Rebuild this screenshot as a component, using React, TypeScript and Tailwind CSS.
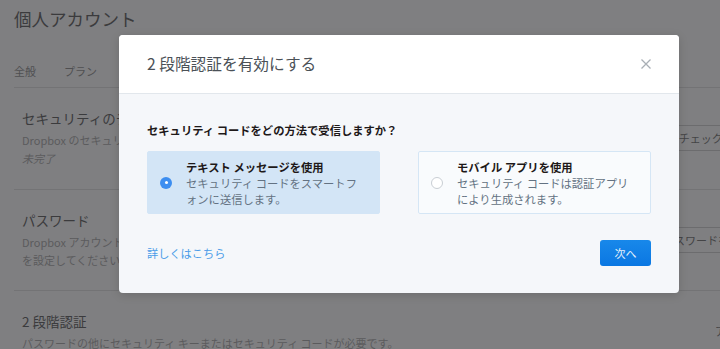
import React from "react";

function Section({
  title,
  lines,
  italicLast,
  action,
  pb,
}: {
  title: string;
  lines: string[];
  italicLast?: boolean;
  action: React.ReactNode;
  pb: string;
}) {
  return (
    <div className={`flex items-center border-b border-[#737375] pl-2 pt-5 ${pb}`}>
      <div className="w-[560px] shrink-0">
        <div className="text-[13.5px] leading-5 text-[#3b3b3d]">{title}</div>
        <div className="mt-[3px] text-[11px] leading-[18px] text-[#5b5b5d]">
          {lines.map((l, i) => (
            <div key={i} className={italicLast && i === lines.length - 1 ? "italic" : ""}>
              {l}
            </div>
          ))}
        </div>
      </div>
      {action}
    </div>
  );
}

function Radio({ checked }: { checked: boolean }) {
  return checked ? (
    <span className="flex size-3 shrink-0 items-center justify-center rounded-full bg-[#3d8ef0]">
      <span className="size-[3px] rounded-full bg-white" />
    </span>
  ) : (
    <span className="size-3 shrink-0 rounded-full border border-[#c9ced4] bg-white" />
  );
}

function Option({
  checked,
  title,
  desc,
}: {
  checked: boolean;
  title: string;
  desc: [string, string];
}) {
  return (
    <div
      className={`flex h-[63px] items-center rounded-[2px] border pl-3 pr-[19px] ${
        checked ? "border-[#d3e5f6] bg-[#d3e5f6]" : "border-[#d5e6f5] bg-[#f9fbfd]"
      }`}
    >
      <Radio checked={checked} />
      <div className="ml-[14px] text-[11.3px] leading-4">
        <div className="font-bold text-[#1e1919]">{title}</div>
        <div className="text-[#637282]">
          {desc[0]}
          <br />
          {desc[1]}
        </div>
      </div>
    </div>
  );
}

export default function App() {
  return (
    <div className="relative h-[349px] w-[720px] overflow-hidden bg-[#7f7f81] font-['Noto_Sans_CJK_JP',sans-serif]">
      {/* page behind the dialog */}
      <div className="ml-[14px] w-[800px]">
        <div className="pt-[7px] text-[17.5px] leading-6 text-[#3b3b3d]">個人アカウント</div>
        <div className="mt-8 flex gap-[28px] border-b border-[#737375] pb-[8px] text-[11px] leading-4 text-[#4f4f51]">
          <span>全般</span>
          <span>プラン</span>
          <span>セキュリティ</span>
        </div>
        <Section
          title="セキュリティのチェック"
          lines={["Dropbox のセキュリティ チェックを実行してください。", "未完了"]}
          italicLast
          pb="pb-[22px]"
          action={
            <span className="ml-[16px] whitespace-nowrap rounded-[3px] border border-[#6c6c6e] px-3 text-[11px] leading-6 text-[#444446]">
              セキュリティ チェックを開始
            </span>
          }
        />
        <Section
          title="パスワード"
          lines={["Dropbox アカウントに強力なパスワード", "を設定してください。"]}
          pb="pb-[21px]"
          action={
            <span className="ml-[68px] whitespace-nowrap rounded-[3px] border border-[#6c6c6e] px-3 text-[11px] leading-6 text-[#444446]">
              パスワードを変更
            </span>
          }
        />
        <Section
          title="2 段階認証"
          lines={["パスワードの他にセキュリティ キーまたはセキュリティ コードが必要です。"]}
          pb="pb-5"
          action={
            <span className="ml-[133px] whitespace-nowrap text-[11px] text-[#444446]">アクティブ</span>
          }
        />
      </div>

      {/* dialog */}
      <div className="absolute left-[119px] top-[35px] w-[560px] overflow-hidden rounded-[4px] bg-[#f5f7fa] shadow-[0_2px_10px_rgba(0,0,0,0.15)]">
        <div className="flex h-[59px] items-center justify-between border-b border-[#e2e7ec] bg-white px-[28px]">
          <h1 className="text-[15.7px] text-[#4b5157]">2 段階認証を有効にする</h1>
          <svg width="10" height="10" viewBox="0 0 10 10">
            <path d="M0.5 0.5 9.5 9.5 M9.5 0.5 0.5 9.5" stroke="#a9afb5" strokeWidth="1.3" />
          </svg>
        </div>
        <div className="px-[28px] pb-[27px] pt-[28px]">
          <div className="text-[11.3px] font-bold leading-4 text-[#1e1919]">
            セキュリティ コードをどの方法で受信しますか？
          </div>
          <div className="mt-[13px] grid grid-cols-2 gap-[38px]">
            <Option
              checked
              title="テキスト メッセージを使用"
              desc={["セキュリティ コードをスマートフ", "ォンに送信します。"]}
            />
            <Option
              checked={false}
              title="モバイル アプリを使用"
              desc={["セキュリティ コードは認証アプリ", "により生成されます。"]}
            />
          </div>
          <div className="mt-[26px] flex items-center justify-between">
            <a className="text-[11.2px] text-[#4a9ce8]">詳しくはこちら</a>
            <button className="h-[26px] w-[51px] rounded-[3px] bg-gradient-to-b from-[#1888ea] to-[#0a77e2] text-[11px] text-[#e6f1fc]">
              次へ
            </button>
          </div>
        </div>
      </div>
    </div>
  );
}
